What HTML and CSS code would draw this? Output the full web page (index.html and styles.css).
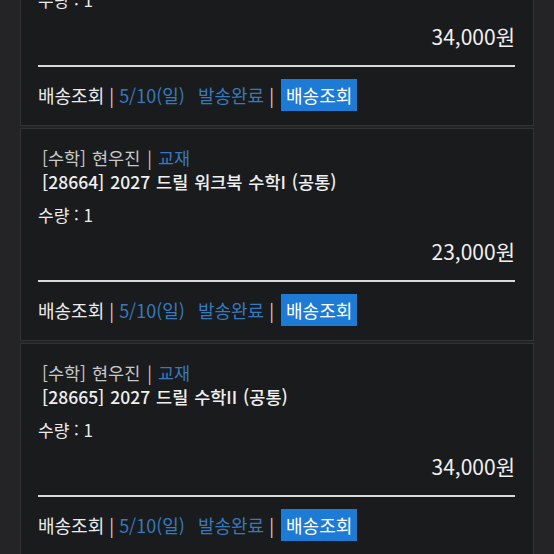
FILE: index.html
```html
<!DOCTYPE html>
<html lang="ko">
<head>
<meta charset="utf-8">
<link rel="stylesheet" href="styles.css">
</head>
<body>
<div class="list">
  <div class="card partial">
    <div class="qty">수량 : 1</div>
    <div class="price">34,000원</div>
    <div class="rule"></div>
    <div class="ship">
      <span>배송조회</span><span class="sep">|</span><span class="blue">5/10(일) 발송완료</span><span class="sep">|</span><span class="btn">배송조회</span>
    </div>
  </div>
  <div class="card">
    <div class="meta">[수학] 현우진<span class="sep2">|</span><span class="blue">교재</span></div>
    <div class="title">[28664] 2027 드릴 워크북 수학I (공통)</div>
    <div class="qty">수량 : 1</div>
    <div class="price">23,000원</div>
    <div class="rule"></div>
    <div class="ship">
      <span>배송조회</span><span class="sep">|</span><span class="blue">5/10(일) 발송완료</span><span class="sep">|</span><span class="btn">배송조회</span>
    </div>
  </div>
  <div class="card">
    <div class="meta">[수학] 현우진<span class="sep2">|</span><span class="blue">교재</span></div>
    <div class="title">[28665] 2027 드릴 수학II (공통)</div>
    <div class="qty">수량 : 1</div>
    <div class="price">34,000원</div>
    <div class="rule"></div>
    <div class="ship">
      <span>배송조회</span><span class="sep">|</span><span class="blue">5/10(일) 발송완료</span><span class="sep">|</span><span class="btn">배송조회</span>
    </div>
  </div>
</div>
</body>
</html>
```
FILE: styles.css
```css
html, body {
  margin: 0;
  padding: 0;
  background: #242427;
  height: 100%;
  overflow: hidden;
}
body {
  font-family: "Noto Sans CJK KR", "Noto Sans", sans-serif;
  color: #ebebeb;
  font-size: 17px;
}
.list {
  margin-top: -12px;
  display: flex;
  flex-direction: column;
  gap: 2px;
}
.card {
  margin-left: 20px;
  width: 514px;
  box-sizing: border-box;
  background: #1a1b1d;
  border: 1px solid #323337;
  padding: 17px 18px 14px 17px;
}
.card.partial {
  border-top: none;
  padding-top: 0;
}
.meta {
  padding-left: 4px;
  line-height: 24px;
  font-size: 17.5px;
  color: #c9c9c9;
  word-spacing: 1px;
}
.sep2 {
  margin: 0 6px 0 7px;
  color: #c9c9c9;
}
.title {
  padding-left: 4px;
  line-height: 24px;
  font-weight: 500;
  font-size: 17.5px;
  color: #f0f0f0;
  word-spacing: 1px;
}
.qty {
  margin-top: 9px;
  line-height: 24px;
  color: #ececec;
}
.card.partial .qty {
  margin-top: 0;
}
.price {
  margin-top: 9px;
  line-height: 30px;
  font-size: 21px;
  text-align: right;
  color: #f0f0f0;
}
.rule {
  margin-top: 14px;
  height: 2px;
  background: #d9d9d9;
}
.ship {
  margin-top: 12px;
  height: 32px;
  display: flex;
  align-items: center;
  font-size: 18px;
  word-spacing: 8px;
}
.sep {
  margin: 0 5px;
  color: #d0d0d0;
}
.blue {
  color: #3779bd;
}
.btn {
  margin-left: 2px;
  background: #1d7bd6;
  color: #ffffff;
  height: 32px;
  line-height: 32px;
  padding: 0 5px;
}
```
